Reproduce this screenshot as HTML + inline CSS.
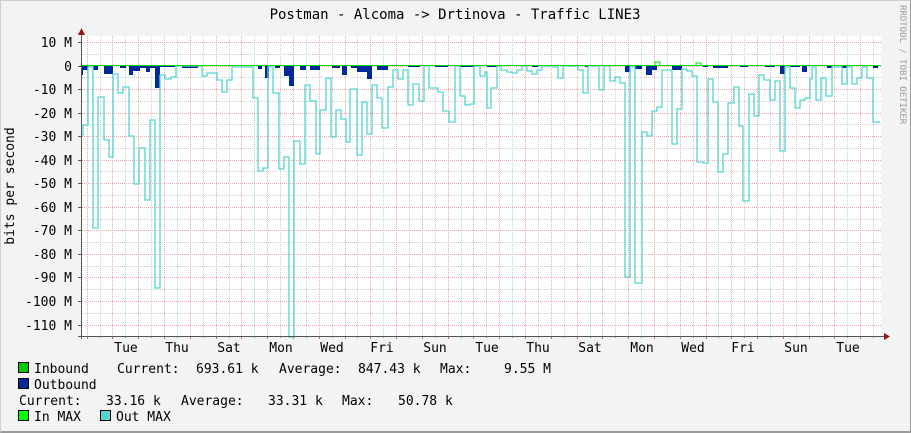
<!DOCTYPE html>
<html><head><meta charset="utf-8"><style>
html,body{margin:0;padding:0}
body{width:911px;height:432px;overflow:hidden;background:#f3f3f3;position:relative;font-family:"DejaVu Sans Mono","Liberation Mono",monospace}
.frame{position:absolute;left:0;top:0;width:909px;height:430px;border-top:1px solid #cfcfcf;border-left:1px solid #cfcfcf;border-right:1px solid #9a9a9a;border-bottom:2px solid #9a9a9a;box-sizing:content-box}
svg{position:absolute;left:0;top:0}
</style></head><body>
<div class="frame"></div>
<svg width="911" height="432" viewBox="0 0 911 432" xmlns="http://www.w3.org/2000/svg" font-family="DejaVu Sans Mono, Liberation Mono, monospace">
<rect x="81" y="36" width="800" height="300" fill="#ffffff"/>
<g id="grid" stroke-width="1" shape-rendering="crispEdges"></g>
<!-- outbound area -->
<g fill="#002a97" shape-rendering="crispEdges">
<rect x="81" y="65" width="2" height="10"/><rect x="83" y="65" width="5" height="5"/><rect x="93" y="65" width="5" height="5"/><rect x="104" y="65" width="9" height="9"/><rect x="120" y="65" width="6" height="3"/><rect x="129" y="65" width="4" height="10"/><rect x="133" y="65" width="7" height="6"/><rect x="140" y="65" width="6" height="3"/><rect x="146" y="65" width="4" height="7"/><rect x="150" y="65" width="5" height="3"/><rect x="155" y="65" width="5" height="23"/><rect x="160" y="65" width="15" height="2"/><rect x="182" y="65" width="16" height="3"/><rect x="258" y="65" width="4" height="4"/><rect x="265" y="65" width="4" height="13"/><rect x="275" y="65" width="5" height="3"/><rect x="284" y="65" width="5" height="11"/><rect x="289" y="65" width="5" height="21"/><rect x="300" y="65" width="6" height="5"/><rect x="310" y="65" width="10" height="5"/><rect x="332" y="65" width="8" height="3"/><rect x="342" y="65" width="5" height="10"/><rect x="351" y="65" width="6" height="3"/><rect x="357" y="65" width="10" height="7"/><rect x="367" y="65" width="5" height="14"/><rect x="377" y="65" width="11" height="5"/><rect x="408" y="65" width="12" height="2"/><rect x="435" y="65" width="13" height="2"/><rect x="460" y="65" width="15" height="2"/><rect x="487" y="65" width="10" height="2"/><rect x="532" y="65" width="6" height="2"/><rect x="585" y="65" width="4" height="2"/><rect x="625" y="65" width="5" height="7"/><rect x="635" y="65" width="7" height="4"/><rect x="646" y="65" width="6" height="10"/><rect x="652" y="65" width="5" height="5"/><rect x="672" y="65" width="10" height="5"/><rect x="703" y="65" width="5" height="2"/><rect x="713" y="65" width="15" height="3"/><rect x="740" y="65" width="8" height="2"/><rect x="765" y="65" width="10" height="2"/><rect x="780" y="65" width="5" height="9"/><rect x="790" y="65" width="10" height="2"/><rect x="802" y="65" width="5" height="7"/><rect x="827" y="65" width="5" height="3"/><rect x="842" y="65" width="5" height="3"/><rect x="873" y="65" width="5" height="3"/>
</g>
<polyline fill="none" stroke="#55d6d0" stroke-width="1.3" points="81,135 83,135 83,125 88,125 88,67 93,67 93,228 98,228 98,97 104,97 104,140 109,140 109,157 113,157 113,74 118,74 118,93 123,93 123,87 129,87 129,136 134,136 134,184 139,184 139,148 145,148 145,200 150,200 150,120 155,120 155,288 160,288 160,75 165,75 165,79 171,79 171,77 176,77 176,66 202,66 202,76 207,76 207,73 217,73 217,80 222,80 222,92 227,92 227,80 232,80 232,67 253,67 253,98 258,98 258,171 263,171 263,168 268,168 268,67 273,67 273,93 279,93 279,169 284,169 284,157 289,157 289,337 294,337 294,141 300,141 300,164 305,164 305,85 310,85 310,101 316,101 316,154 320,154 320,110 326,110 326,78 331,78 331,137 336,137 336,110 341,110 341,119 346,119 346,142 350,142 350,89 357,89 357,155 362,155 362,102 367,102 367,134 372,134 372,85 377,85 377,98 382,98 382,128 388,128 388,87 393,87 393,70 398,70 398,79 403,79 403,70 408,70 408,105 413,105 413,84 419,84 419,101 424,101 424,66 429,66 429,88 438,88 438,92 443,92 443,111 449,111 449,122 455,122 455,66 460,66 460,96 465,96 465,105 470,105 470,104 474,104 474,66 480,66 480,76 485,76 485,72 487,72 487,108 491,108 491,88 497,88 497,66 501,66 501,70 507,70 507,72 512,72 512,73 517,73 517,70 522,70 522,66 527,66 527,71 532,71 532,74 537,74 537,70 542,70 542,66 553,66 553,67 558,67 558,78 563,78 563,66 578,66 578,70 583,70 583,93 588,93 588,66 599,66 599,90 604,90 604,66 610,66 610,81 615,81 615,77 620,77 620,83 625,83 625,277 630,277 630,67 635,67 635,283 642,283 642,132 647,132 647,136 652,136 652,111 657,111 657,107 662,107 662,70 672,70 672,144 677,144 677,109 682,109 682,69 687,69 687,71 692,71 692,76 697,76 697,162 703,162 703,163 708,163 708,79 713,79 713,102 718,102 718,172 723,172 723,154 728,154 728,103 734,103 734,87 739,87 739,126 743,126 743,201 749,201 749,94 754,94 754,116 759,116 759,75 764,75 764,80 770,80 770,100 775,100 775,81 780,81 780,151 785,151 785,67 790,67 790,88 795,88 795,108 800,108 800,100 805,100 805,98 810,98 810,79 812,79 812,67 816,67 816,100 821,100 821,78 826,78 826,96 832,96 832,67 842,67 842,84 847,84 847,67 852,67 852,84 857,84 857,78 862,78 862,67 867,67 867,78 873,78 873,122 880,122"/>
<line x1="81" y1="65.5" x2="881" y2="65.5" stroke="#00e000" stroke-width="1"/>
<polyline fill="none" stroke="#00e000" points="655,65 655,62 660,62 660,65"/>
<polyline fill="none" stroke="#00e000" points="696,65 696,63 701,63 701,65"/>
<!-- axes -->
<line x1="81.5" y1="32" x2="81.5" y2="339" stroke="#555" shape-rendering="crispEdges"/>
<line x1="78" y1="336.5" x2="885" y2="336.5" stroke="#555" shape-rendering="crispEdges"/>
<polygon points="78,35 85,35 81.5,28" fill="#8b1a1a"/>
<polygon points="884,333 884,340 890,336.5" fill="#8b1a1a"/>
<g font-size="13" fill="#000" text-anchor="end" id="ylab"></g>
<g font-size="13" fill="#000" text-anchor="middle">
<text x="126" y="352">Tue</text><text x="177" y="352">Thu</text><text x="229" y="352">Sat</text><text x="281" y="352">Mon</text><text x="332" y="352">Wed</text><text x="382" y="352">Fri</text><text x="435" y="352">Sun</text><text x="487" y="352">Tue</text><text x="538" y="352">Thu</text><text x="590" y="352">Sat</text><text x="642" y="352">Mon</text><text x="693" y="352">Wed</text><text x="743" y="352">Fri</text><text x="796" y="352">Sun</text><text x="848" y="352">Tue</text>
</g>
<text x="455" y="19" font-size="14" text-anchor="middle" fill="#000">Postman - Alcoma -&gt; Drtinova - Traffic LINE3</text>
<text transform="translate(14,186) rotate(-90)" font-size="13" text-anchor="middle" fill="#000">bits per second</text>
<text transform="translate(900,5) rotate(90)" font-size="9" fill="#9a9a9a">RRDTOOL / TOBI OETIKER</text>
<!-- legend -->
<g stroke="#000" stroke-width="1" shape-rendering="crispEdges">
<rect x="18.5" y="362.5" width="10" height="10" fill="#00cc00"/>
<rect x="18.5" y="378.5" width="10" height="10" fill="#002a97"/>
<rect x="18.5" y="410.5" width="10" height="10" fill="#00ff00"/>
<rect x="100.5" y="410.5" width="10" height="10" fill="#55d6d0"/>
</g>
<g font-size="13" fill="#000" xml:space="preserve">
<text x="34" y="373">Inbound</text><text x="117" y="373">Current:</text><text x="196" y="373">693.61 k</text><text x="279" y="373">Average:</text><text x="358" y="373">847.43 k</text><text x="440" y="373">Max:</text><text x="504" y="373">9.55 M</text>
<text x="34" y="389">Outbound</text>
<text x="19" y="405">Current:</text><text x="106" y="405">33.16 k</text><text x="181" y="405">Average:</text><text x="268" y="405">33.31 k</text><text x="342" y="405">Max:</text><text x="398" y="405">50.78 k</text>
<text x="34" y="421">In MAX</text><text x="116" y="421">Out MAX</text>
</g>
</svg>
<script>
(function(){
var ns="http://www.w3.org/2000/svg",g=document.getElementById("grid"),yl=document.getElementById("ylab");
var svg=g.ownerSVGElement;
function ln(x1,y1,x2,y2,c,dash){var l=document.createElementNS(ns,"line");l.setAttribute("x1",x1);l.setAttribute("y1",y1);l.setAttribute("x2",x2);l.setAttribute("y2",y2);l.setAttribute("stroke",c);if(dash)l.setAttribute("stroke-dasharray","1,1");g.appendChild(l);}
var s=23.55,z=65.5;
for(var k=-23;k<=2;k++){var y=Math.round(z-k*s/2)+0.5;if(y<36||y>336)continue;
 var major=(k%2===0);ln(82,y,881,y,major?"#f0a8a8":"#d0d0d0",true);
 if(major){ln(78,y,81,y,"#555");var v=k/2*10;var t=document.createElementNS(ns,"text");t.setAttribute("x",72);t.setAttribute("y",y+4.5);t.textContent=(v===0?"0":(v<0?"-":"")+Math.abs(v)+" M");yl.appendChild(t);}}
var d=25.786;
for(var i=0;i<62;i++){var x=Math.round(86.7+i*d/2)+0.5;if(x>881)break;var major=(i%2===0);
 ln(x,36,x,336,major?"#f0a8a8":"#d0d0d0",true);
 if(major)ln(x,336,x,339,"#e06060");else ln(x,336,x,338,"#999");}
})();
</script>
</body></html>
